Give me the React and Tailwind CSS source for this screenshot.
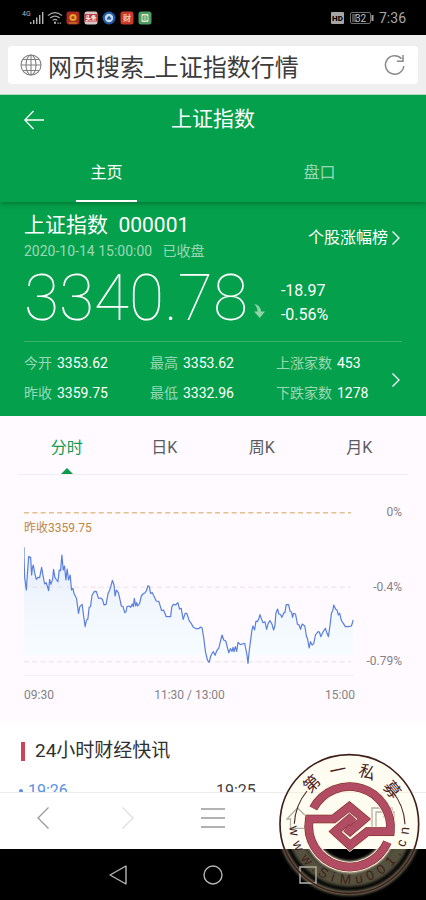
import React from 'react';

const price =
  '72,172 72,200 74,262 79,300 82,255 86,200 92,202 95,255 97,235 100,225 104,248 109,268 114,262 119,263 125,232 129,255 134,282 139,278 142,288 146,302 149,268 153,283 158,268 161,238 165,262 170,270 174,275 178,240 182,242 186,195 190,240 194,228 198,270 202,237 206,270 211,255 215,300 219,295 223,312 230,325 236,370 240,350 247,343 251,375 256,410 260,390 264,388 268,352 272,350 277,315 284,304 290,305 296,325 302,324 308,328 313,345 319,343 325,310 330,300 333,290 338,271 343,285 346,318 350,300 356,308 360,325 365,348 370,350 375,368 379,365 382,350 388,348 393,352 398,342 401,350 404,325 408,348 411,338 414,348 420,340 425,318 430,312 436,308 440,303 445,287 449,290 453,310 458,308 464,320 470,333 478,335 486,362 492,360 500,380 513,380 517,350 522,343 528,345 535,338 540,357 545,355 551,388 557,370 562,370 569,392 575,400 582,412 590,416 598,416 603,411 608,414 613,445 618,485 624,510 629,517 634,498 639,488 ' +
  '642,485 647,496 653,480 658,475 663,455 668,435 673,450 679,453 684,472 688,488 693,476 698,484 701,472 704,485 708,470 712,484 716,457 723,464 729,462 736,460 740,480 743,495 746,520 750,480 754,450 758,420 761,408 766,420 770,393 774,395 778,388 782,374 786,385 791,398 797,395 802,418 807,400 812,392 818,402 823,420 827,408 830,370 835,357 839,372 844,374 848,382 854,368 857,368 861,344 868,344 873,365 877,366 880,382 883,370 889,372 895,403 900,405 904,418 909,402 917,408 922,440 925,445 930,474 934,455 939,465 944,460 949,435 957,425 961,426 965,440 972,425 979,415 984,430 988,440 993,405 997,370 1001,362 1004,345 1010,358 1014,360 1018,375 1022,370 1027,392 1033,400 1039,410 1049,410 1057,408 1060,400 1062,390';

const stats = [
  ['今开', '3353.62'],
  ['最高', '3353.62'],
  ['上涨家数', '453'],
  ['昨收', '3359.75'],
  ['最低', '3332.96'],
  ['下跌家数', '1278'],
];

function Chevron({ className }) {
  return (
    <svg className={className} viewBox="0 0 10 16" fill="none" stroke="currentColor" strokeWidth="1.3" aria-hidden="true">
      <path d="M1.5 1.5 8 8 1.5 14.5" />
    </svg>
  );
}

function StatusBar() {
  return (
    <div className="flex h-[35px] shrink-0 items-center justify-between bg-black pr-5 pl-[22px] text-[#a8a8a8]">
      <div className="flex items-center gap-[3px]">
        <svg className="h-4 w-[22px]" viewBox="0 0 22 16" aria-label="4G">
          <text x="0" y="6" fontSize="7" fontFamily="Roboto, sans-serif" fill="#b5b5b5">4G</text>
          <g fill="#b5b5b5">
            <rect x="8" y="12" width="1.4" height="2" />
            <rect x="11" y="10" width="1.4" height="4" />
            <rect x="14" y="7.5" width="1.4" height="6.5" />
            <rect x="17" y="5" width="1.4" height="9" />
            <rect x="20" y="2" width="1.4" height="12" />
          </g>
        </svg>
        <svg className="h-4 w-4" viewBox="0 0 17 16" fill="none" stroke="#a8a8a8" strokeWidth="1.3" aria-label="Wi-Fi">
          <path d="M1 5.5Q8.5-1 16 5.5M3.5 8Q8.5 3.8 13.5 8M6 10.5Q8.5 8.5 11 10.5" />
          <circle cx="8.5" cy="13" r=".6" />
          <path d="M11 13.5h4" strokeDasharray="1.5 1" />
        </svg>
        <svg className="h-[14px] w-[86px]" viewBox="0 0 86 14" fontFamily="'Noto Sans CJK SC', sans-serif" aria-hidden="true">
          <rect x=".5" y=".5" width="13" height="13" rx="2.5" fill="#a9291f" />
          <circle cx="7" cy="6.5" r="3.6" fill="#e2a72b" />
          <circle cx="7" cy="6.5" r="1.6" fill="#b93a1d" />
          <path d="M3 12h8" stroke="#d99c2c" />
          <rect x="18.5" y=".5" width="13" height="13" rx="2.5" fill="#d9c9c6" />
          <path d="M18.5 3h13v7.5h-13z" fill="#c23a3d" />
          <text x="19.5" y="9" fontSize="5.5" fontWeight="700" fill="#fff">头条</text>
          <circle cx="43" cy="7" r="6.5" fill="#2259a6" />
          <circle cx="43" cy="7" r="4.2" fill="#c9d9ec" />
          <path d="M40.5 8.5q2.5-7 5 0z" fill="#2259a6" />
          <rect x="54.5" y=".5" width="13" height="13" rx="2.5" fill="#c93a28" />
          <text x="57" y="10" fontSize="8" fontWeight="700" fill="#f2c3b2">财</text>
          <rect x="72.5" y=".5" width="13" height="13" rx="2.5" fill="#4c9c68" />
          <rect x="75.5" y="3" width="7" height="8" rx="1" fill="#e9e5c2" />
          <path d="M77 5h4v4h-4zM77 7h4" fill="none" stroke="#4c9c68" />
        </svg>
      </div>
      <div className="flex items-center gap-[6px]">
        <svg className="h-3 w-[13px]" viewBox="0 0 13 12" aria-label="HD">
          <rect width="13" height="12" rx="1" fill="#a5a5a5" />
          <text x="6.5" y="9" fontSize="8" fontWeight="800" textAnchor="middle" fontFamily="Roboto, sans-serif" fill="#000">HD</text>
        </svg>
        <svg className="h-3 w-[24px]" viewBox="0 0 24 12" aria-label="32%">
          <rect x=".5" y=".5" width="20" height="11" rx="1.5" fill="none" stroke="#707070" />
          <path d="M2 2h5v8H2z" fill="#4d4d4d" />
          <path d="M22.5 3v6" stroke="#a5a5a5" strokeWidth="2" />
          <text x="10.5" y="9.5" fontSize="10" textAnchor="middle" fontFamily="Roboto, sans-serif" fill="#c5c5c5">32</text>
        </svg>
        <span className="-ml-px text-sm">7:36</span>
      </div>
    </div>
  );
}

function SearchBar() {
  return (
    <div className="shrink-0 border-b border-[#b5dcc2] bg-[#eeefee] px-2 pt-[11px] pb-[10px]">
      <form className="flex h-[38px] items-center rounded-sm bg-white px-3" onSubmit={(e) => e.preventDefault()}>
        <svg className="h-[22px] w-[22px] shrink-0" viewBox="0 0 22 22" fill="none" stroke="#808080" strokeWidth="1.1" aria-hidden="true">
          <circle cx="11" cy="11" r="10" />
          <ellipse cx="11" cy="11" rx="5" ry="10" />
          <path d="M11 1v20M1 11h20M3 5.5h16M3 16.5h16" />
        </svg>
        <input
          aria-label="网址"
          className="ml-[6px] h-[38px] min-w-0 flex-1 bg-transparent text-2xl text-[#3c3c3c] outline-none"
          defaultValue="网页搜索_上证指数行情"
        />
        <button type="button" aria-label="刷新">
          <svg className="h-[22px] w-[22px]" viewBox="0 0 22 22" fill="none" stroke="#8a8a8a" strokeWidth="1.5">
            <path d="M19.8 12A9.2 9.2 0 1 1 17.5 4.8" />
            <path d="M19 1v6.2h-6.2" />
          </svg>
        </button>
      </form>
    </div>
  );
}

function Header() {
  return (
    <header className="relative z-10 bg-[#04a04b] text-white shadow-[0_1px_5px_rgba(0,60,20,0.5)]">
      <div className="grid h-[50px] grid-cols-[60px_1fr_60px] items-center">
        <button aria-label="返回" className="pl-6">
          <svg className="h-5 w-5" viewBox="0 0 20 20" fill="none" stroke="currentColor" strokeWidth="1.3">
            <path d="M9.5 1 .8 10l8.7 9M.8 10H20" />
          </svg>
        </button>
        <h1 className="text-center text-[21px]">上证指数</h1>
      </div>
      <nav className="grid h-[57px] grid-cols-2 justify-items-center">
        <button className="w-[61px] border-b-2 border-white text-base">主页</button>
        <button className="w-[61px] border-b-2 border-transparent text-base text-white/60">盘口</button>
      </nav>
    </header>
  );
}

function Quote() {
  return (
    <section className="bg-[#04a04b] px-6 pt-[10px] text-white">
      <div className="flex items-center justify-between">
        <div>
          <h2 className="text-[21px] leading-[26px] whitespace-pre">上证指数  000001</h2>
          <p className="text-sm leading-[26px] whitespace-pre text-white/60">2020-10-14 15:00:00   已收盘</p>
        </div>
        <a href="#rank" className="flex items-center gap-[3px] pr-px text-base">
          个股涨幅榜
          <Chevron className="h-4 w-[10px]" />
        </a>
      </div>
      <div className="flex h-[77px] items-center pb-2">
        <strong className="text-[64px] leading-[68px] font-thin">3340.78</strong>
        <svg className="mt-6 ml-[5px] h-4 w-3" viewBox="0 0 12 16" fill="#8fd3ab" aria-label="下跌">
          <path d="M1 1Q7.5 2 8 8.5h4L6.8 15 1 8.5h3.5Q4.5 4 1 1z" />
        </svg>
        <div className="mt-2 ml-4 text-base leading-6">
          <p>-18.97</p>
          <p>-0.56%</p>
        </div>
      </div>
      <div className="relative border-t border-white/20 pt-[6px] pb-2">
        <dl className="grid grid-cols-3 text-sm leading-[30px]">
          {stats.map(([k, v]) => (
            <div key={k} className="flex gap-[5px] whitespace-nowrap">
              <dt className="text-white/60">{k}</dt>
              <dd>{v}</dd>
            </div>
          ))}
        </dl>
        <button aria-label="更多" className="absolute top-[30px] right-px">
          <Chevron className="h-4 w-[10px]" />
        </button>
      </div>
    </section>
  );
}

function Chart() {
  return (
    <section className="bg-[#fefaff] px-[18px] pb-4">
      <nav className="grid h-[59px] grid-cols-4 border-b border-[#f1edf2] text-[#5c5a5e]">
        {['分时', '日K', '周K', '月K'].map((t, i) => (
          <button key={t} className={i === 0 ? 'relative pt-[5px] text-base text-[#169a53]' : 'pt-[5px] text-base'}>
            {t}
            {i === 0 && (
              <svg className="absolute bottom-0 left-1/2 h-[6px] w-3 -translate-x-1/2" viewBox="0 0 12 6" fill="#0d9a4c" aria-hidden="true">
                <path d="M6 0l6 6H0z" />
              </svg>
            )}
          </button>
        ))}
      </nav>
      <div className="mt-[26px] flex px-[6px]">
        <div className="relative min-w-0 flex-1">
          <svg className="block h-[175px] w-full" viewBox="72 33 993 525" preserveAspectRatio="none" fill="none" aria-label="分时走势">
            <defs>
              <linearGradient id="area" x1="0" y1="172" x2="0" y2="497" gradientUnits="userSpaceOnUse">
                <stop offset="0" stopColor="#e2ebfb" />
                <stop offset=".55" stopColor="#f2f7fe" />
                <stop offset="1" stopColor="#f6fcff" />
              </linearGradient>
              <clipPath id="plot">
                <rect x="72" y="33" width="993" height="464" />
              </clipPath>
            </defs>
            <polygon points={'72,497 ' + price + ' 1062,497'} fill="url(#area)" clipPath="url(#plot)" />
            <path d="M72 68.5H1056" stroke="#e2bf8d" strokeWidth="4.5" strokeDasharray="15 10" />
            <path d="M72 291.5H1056M72 515.5H1056" stroke="#eadfe8" strokeWidth="3" strokeDasharray="15 10" />
            <path d="M72 556H1065" stroke="#f3eff5" strokeWidth="3" />
            <polyline points={price} stroke="#587fdc" strokeWidth="3.6" strokeLinejoin="round" />
          </svg>
          <span className="absolute top-[17px] left-0 text-xs leading-5 text-[#bd873b]">昨收3359.75</span>
        </div>
        <div className="mt-px flex h-[169px] w-12 flex-col justify-between text-right text-xs leading-5 text-[#858287]">
          <span>0%</span>
          <span>-0.4%</span>
          <span>-0.79%</span>
        </div>
      </div>
      <div className="mt-[9px] mr-[53px] ml-[6px] flex justify-between text-xs leading-5 text-[#858287]">
        <span>09:30</span>
        <span>11:30 / 13:00</span>
        <span>15:00</span>
      </div>
    </section>
  );
}

function News() {
  return (
    <section className="bg-white px-[21px] pt-4">
      <h2 className="flex items-center gap-[10px] text-[19px] leading-7 text-[#303030]">
        <span className="h-[19px] w-1 bg-[#cf4359]" />
        24小时财经快讯
      </h2>
      <ul className="mt-[14px] grid grid-cols-2 text-base leading-6 text-[#444]">
        <li className="-ml-[2px] flex items-center gap-[5px] text-[#5b92e4]">
          <span className="h-1 w-1 rounded-full bg-[#5b92e4]" />
          19:26
        </li>
        <li className="pl-[3px]">19:25</li>
      </ul>
    </section>
  );
}

function Toolbar() {
  return (
    <nav className="grid h-[57px] shrink-0 grid-cols-5 place-items-center border-t border-[#ececec] bg-white pb-[6px] text-[#999]">
      <button aria-label="后退">
        <svg className="h-[22px] w-3" viewBox="0 0 12 22" fill="none" stroke="currentColor" strokeWidth="1.3"><path d="M11.5.5 1 11l10.5 10.5" /></svg>
      </button>
      <button aria-label="前进" className="text-[#dedede]">
        <svg className="h-[22px] w-3" viewBox="0 0 12 22" fill="none" stroke="currentColor" strokeWidth="1.3"><path d="M.5.5 11 11 .5 21.5" /></svg>
      </button>
      <button aria-label="菜单">
        <svg className="h-5 w-6" viewBox="0 0 24 20" stroke="currentColor" strokeWidth="1.3"><path d="M0 1h24M0 10h24M0 19h24" /></svg>
      </button>
      <button aria-label="主页">
        <svg className="h-[22px] w-6" viewBox="0 0 24 22" fill="none" stroke="currentColor" strokeWidth="1.3"><path d="M1 12 11.5 1 23 12h-3.5v9.5h-15V12z" /></svg>
      </button>
      <button aria-label="窗口">
        <svg className="h-[22px] w-6" viewBox="0 0 24 22" fill="none" stroke="currentColor" strokeWidth="1.3"><path d="M5 21H1V1h20v4M5 5h18v16H5zM12 10l3-2v9" /></svg>
      </button>
    </nav>
  );
}

function SystemNav() {
  return (
    <nav className="grid h-[51px] shrink-0 grid-cols-3 place-items-center bg-black px-[70px] text-[#b5b5b5]">
      <button aria-label="返回">
        <svg className="h-5 w-5" viewBox="0 0 20 20" fill="none" stroke="currentColor" strokeWidth="1.4" strokeLinejoin="round"><path d="M18 1v18L2 10z" /></svg>
      </button>
      <button aria-label="主屏幕">
        <svg className="h-5 w-5" viewBox="0 0 20 20" fill="none" stroke="currentColor" strokeWidth="1.4"><circle cx="10" cy="10" r="9" /></svg>
      </button>
      <button aria-label="最近任务">
        <svg className="h-5 w-5" viewBox="0 0 20 20" fill="none" stroke="currentColor" strokeWidth="1.4"><path d="M2 2h16v16H2z" /></svg>
      </button>
    </nav>
  );
}

const siteLetters = [
  ['w', 83], ['w', 67], ['w', 50], ['.', 38], ['S', 28], ['i', 17], ['M', 4],
  ['u', -10], ['0', -22], ['0', -35], ['1', -48], ['.', -59], ['c', -70], ['n', -83],
];
const nameLetters = [['第', -43], ['一', -12], ['私', 19], ['募', 51]];
const upperBand = 'M130 190A123 123 0 0 1 361 260H292L240 301 195 260 238 222 250 233';
const lowerBand = 'M352 292A123 123 0 0 1 118 222H191L238 185 283 222 240 259 228 249';

function Seal() {
  return (
    <svg className="pointer-events-none absolute right-0 bottom-0 h-[155px] w-[156px]" viewBox="0 0 468 465" fill="none" aria-label="第一私募 www.SiMu001.cn">
      <defs>
        <clipPath id="light"><rect width="468" height="312" /></clipPath>
        <clipPath id="dark"><rect y="312" width="468" height="153" /></clipPath>
        <filter id="glow" x="-20%" y="-20%" width="140%" height="140%"><feGaussianBlur stdDeviation="4" /></filter>
      </defs>
      <circle cx="238" cy="237" r="210" fill="#fff6c8" fillOpacity=".25" clipPath="url(#light)" />
      <g clipPath="url(#dark)">
        <g filter="url(#glow)">
          <circle cx="238" cy="237" r="208" stroke="#b5ae8a" strokeWidth="12" opacity=".7" />
          <circle cx="238" cy="237" r="168" stroke="#a8a17e" strokeWidth="40" opacity=".5" />
          <path d={lowerBand} stroke="#fff3d2" strokeWidth="34" />
        </g>
      </g>
      <circle cx="238" cy="237" r="208" stroke="#3f1f1c" strokeWidth="5" />
      <path d="M73 236A168 168 0 0 1 111 138M366 138A168 168 0 0 1 405 238" stroke="#4c2b27" strokeWidth="3.5" />
      <path d={upperBand + lowerBand} stroke="#fff3d2" strokeWidth="31" />
      <path d={upperBand + lowerBand} stroke="#6d2a38" strokeWidth="26" />
      <path d={upperBand + lowerBand} stroke="#b24c62" strokeWidth="23" />
      <g fill="#4a211d" textAnchor="middle">
        {nameLetters.map(([c, a]) => (
          <text key={c} x="238" y="90" fontSize="50" fontFamily="'Noto Sans CJK SC', sans-serif" transform={`rotate(${a} 238 237)`}>{c}</text>
        ))}
        {siteLetters.map(([c, a], i) => (
          <text key={i} x="238" y="417" fontSize="41" fontFamily="'Liberation Sans', sans-serif" fill="#43201b" transform={`rotate(${a} 238 237)`}>{c}</text>
        ))}
      </g>
    </svg>
  );
}

export default function App() {
  return (
    <div className="relative flex h-screen flex-col overflow-hidden bg-white font-[Roboto,'Noto_Sans_CJK_SC',sans-serif]">
      <StatusBar />
      <SearchBar />
      <main className="min-h-0 flex-1 overflow-hidden">
        <Header />
        <Quote />
        <Chart />
        <News />
      </main>
      <Toolbar />
      <SystemNav />
      <Seal />
    </div>
  );
}
